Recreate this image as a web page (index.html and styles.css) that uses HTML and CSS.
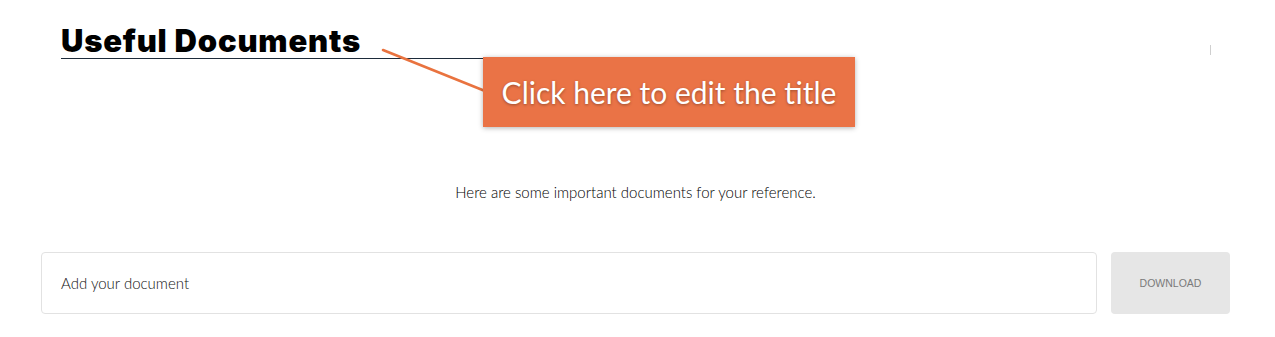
FILE: index.html
```html
<!DOCTYPE html>
<html>
<head>
<meta charset="utf-8">
<link rel="stylesheet" href="styles.css">
</head>
<body>
<div class="page">
  <header class="head">
    <h1 class="title">Useful Documents</h1>
    <span class="mark"></span>
  </header>
  <p class="desc">Here are some important documents for your reference.</p>
  <div class="row">
    <div class="field">Add your document</div>
    <div class="btn">DOWNLOAD</div>
  </div>
  <svg class="pointer" width="110" height="50" viewBox="0 0 110 50"><line x1="2" y1="2" x2="104" y2="43" stroke="#e9733f" stroke-width="2.6" stroke-linecap="round"/></svg>
  <div class="callout">Click here to edit the title</div>
</div>
</body>
</html>
```
FILE: styles.css
```css
html, body { margin: 0; padding: 0; background: #fff; }
.page {
  position: relative;
  width: 1275px;
  height: 337px;
  box-sizing: border-box;
  padding: 24px 45px 0 41px;
  font-family: "Source Sans Pro", "Lato", "Open Sans", sans-serif;
}
.head {
  display: flex;
  justify-content: space-between;
  align-items: flex-start;
  padding-left: 20px;
  padding-right: 19px;
}
.title {
  margin: 0;
  width: 424px;
  font-family: "Inter", "Noto Sans", sans-serif;
  font-weight: 900;
  font-size: 31px;
  letter-spacing: 0.8px;
  line-height: 34px;
  color: #000;
  border-bottom: 1px solid #1d2b3a;
  white-space: nowrap;
}
.mark {
  width: 1px;
  height: 10px;
  margin-top: 21px;
  background: #cfcfcf;
}
.desc {
  margin: 124px 0 0;
  text-align: center;
  font-size: 15px;
  font-weight: 300;
  line-height: 18px;
  color: #000;
}
.row {
  display: flex;
  gap: 14px;
  margin-top: 51px;
}
.field {
  flex: 1;
  height: 60px;
  border: 1px solid #e2e2e2;
  border-radius: 4px;
  display: flex;
  align-items: center;
  padding-left: 19px;
  font-size: 15px;
  font-weight: 300;
  color: #111;
}
.btn {
  width: 119px;
  height: 62px;
  background: #e6e6e6;
  border-radius: 4px;
  display: flex;
  align-items: center;
  justify-content: center;
  font-family: "Liberation Sans", Arial, sans-serif;
  font-size: 10.5px;
  color: #7a7a7a;
}
.pointer {
  position: absolute;
  left: 381px;
  top: 48px;
}
.callout {
  position: absolute;
  left: 483px;
  top: 57px;
  width: 372px;
  height: 70px;
  background: #ea7346;
  box-shadow: 0 1px 5px rgba(0,0,0,0.3);
  display: flex;
  align-items: center;
  justify-content: center;
  color: #fff;
  font-size: 30px;
  text-shadow: 0 1px 3px rgba(0,0,0,0.35);
}
```
